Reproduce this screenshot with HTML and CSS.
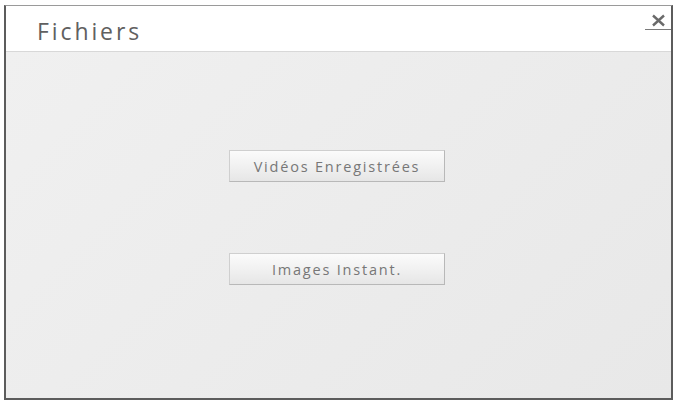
FILE: index.html
```html
<!DOCTYPE html>
<html lang="fr">
<head>
<meta charset="utf-8">
<title>Fichiers</title>
<link rel="stylesheet" href="styles.css">
</head>
<body>
<div class="dialog">
  <div class="header">
    <div class="title">Fichiers</div>
    <div class="close" aria-label="Fermer">
      <svg width="15" height="13" viewBox="0 0 15 13"><path d="M2 1.5 L13 11.5 M13 1.5 L2 11.5" stroke="#6a6a6a" stroke-width="2.4" fill="none"/></svg>
    </div>
  </div>
  <div class="body">
    <button class="btn">Vidéos Enregistrées</button>
    <button class="btn">Images Instant.</button>
  </div>
</div>
</body>
</html>
```
FILE: styles.css
```css
html, body {
  margin: 0;
  padding: 0;
  background: #ffffff;
}
body {
  padding: 5px 0 0 4px;
  font-family: "Open Sans", "DejaVu Sans", sans-serif;
}
.dialog {
  width: 665px;
  height: 392px;
  border-top: 1px solid #9a9a9a;
  border-left: 2px solid #5c5c5c;
  border-right: 2px solid #5c5c5c;
  border-bottom: 2px solid #5c5c5c;
  display: flex;
  flex-direction: column;
  background: #ececec;
}
.header {
  height: 45px;
  background: #ffffff;
  border-bottom: 1px solid #d8d8d8;
  display: flex;
  justify-content: space-between;
  align-items: flex-start;
}
.title {
  margin: 10px 0 0 31px;
  font-size: 23px;
  letter-spacing: 2.9px;
  color: #606060;
  line-height: 30px;
}
.close {
  margin-top: 2px;
  width: 26px;
  height: 15px;
  padding-top: 6px;
  border-bottom: 1px solid #7a7a7a;
  display: flex;
  justify-content: center;
}
.body {
  flex: 1;
  display: flex;
  flex-direction: column;
  align-items: center;
  padding: 98px 3px 0 0;
  gap: 71px;
  background: linear-gradient(135deg, #f0f0f0 0%, #e8e8e8 100%);
}
.btn {
  width: 216px;
  height: 32px;
  border: 1px solid #cfcfcf;
  border-right-color: #b8b8b8;
  border-bottom-color: #b8b8b8;
  background: linear-gradient(#fbfbfb 0%, #f1f1f1 50%, #e6e6e6 100%);
  font-family: "Open Sans", "DejaVu Sans", sans-serif;
  font-size: 14.5px;
  letter-spacing: 1.8px;
  color: #777777;
  padding: 0;
  margin: 0;
}
```
